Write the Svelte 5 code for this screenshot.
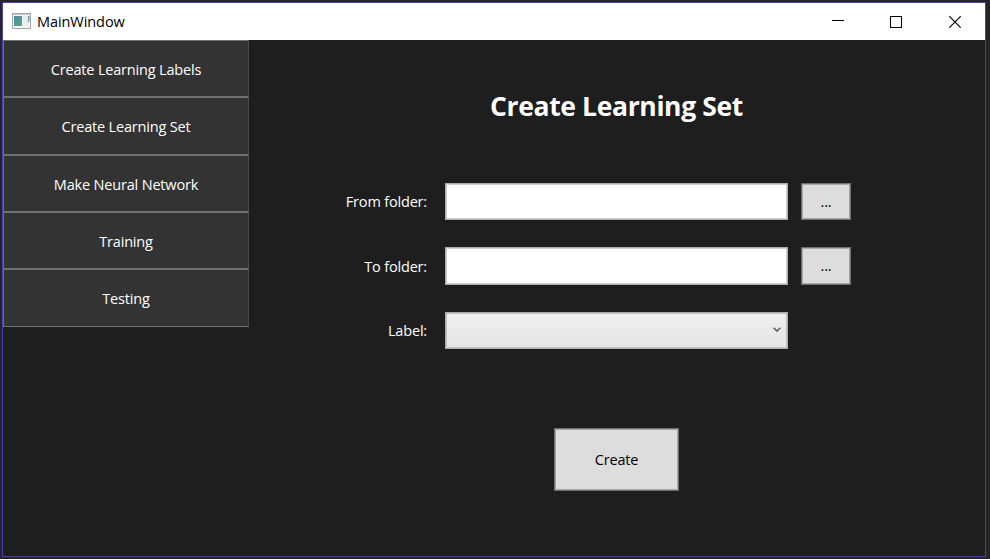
<script>
  const menu = [
    { text: 'Create Learning Labels', h: 57 },
    { text: 'Create Learning Set', h: 58 },
    { text: 'Make Neural Network', h: 57 },
    { text: 'Training', h: 57 },
    { text: 'Testing', h: 58 }
  ];
</script>

<div class="desktop">
  <div class="window">
    <header>
      <svg class="app" width="19" height="16" viewBox="0 0 19 16">
        <defs>
          <linearGradient id="pane" x1="0" y1="0" x2="1" y2="1">
            <stop offset="0" stop-color="#4d87ae" />
            <stop offset="1" stop-color="#5bab7b" />
          </linearGradient>
        </defs>
        <rect x=".5" y=".5" width="18" height="15" fill="#f5f5f5" stroke="#a3a6ad" />
        <path d="M1 1.5H18" stroke="#c9ccd2" />
        <rect x="2" y="3" width="8" height="10" fill="url(#pane)" />
        <rect x="11" y="3" width="6" height="10" fill="#e9ebec" />
        <rect x="16" y="3" width="1.5" height="6" fill="#67a5a2" />
      </svg>
      <span class="name">MainWindow</span>
      <div class="controls">
        <svg class="min" width="12" height="12" viewBox="0 0 12 12"><path d="M0 5.5H12" stroke="#000" /></svg>
        <svg width="12" height="12" viewBox="0 0 12 12"><rect x=".5" y=".5" width="11" height="11" fill="none" stroke="#000" /></svg>
        <svg width="12" height="12" viewBox="0 0 12 12"><path d="M.3 .3L11.7 11.7M11.7 .3L.3 11.7" stroke="#000" stroke-width="1.15" /></svg>
      </div>
    </header>
    <div class="body">
      <nav>
        {#each menu as item}
          <button style="height:{item.h}px"><span>{item.text}</span></button>
        {/each}
      </nav>
      <main>
        <h1>Create Learning Set</h1>
        <div class="form">
          <label for="from">From folder:</label>
          <input id="from" type="text" />
          <button class="push">...</button>
          <label for="to">To folder:</label>
          <input id="to" class="tall" type="text" />
          <button class="push tall">...</button>
          <label for="kind">Label:</label>
          <div id="kind" class="combo" role="combobox" aria-expanded="false" aria-controls="kind" tabindex="0">
            <svg width="8" height="6" viewBox="0 0 8 6"><path d="M.6 .8L4 4.1L7.4 .8" fill="none" stroke="#606060" stroke-width="1.6" /></svg>
          </div>
        </div>
        <button class="push create">Create</button>
      </main>
    </div>
  </div>
</div>

<style>
  :global(body) { margin: 0; background: #252526; }
  * { box-sizing: border-box; }
  .desktop {
    width: 990px; height: 559px; padding: 2px 4px 2px 2px; overflow: hidden;
    background: #252526; font-family: "Open Sans", "Noto Sans", sans-serif;
    font-size: 14.5px; line-height: 20px; font-stretch: 93%; letter-spacing: -0.18px;
  }
  .window { width: 984px; height: 555px; border: 1px solid #483dc2; background: #1e1e1e; }
  header { height: 37px; background: #fff; display: flex; align-items: center; padding-left: 9px; }
  .app { display: block; margin-top: -1px; }
  .name { margin-left: 6px; color: #000; letter-spacing: -0.07px; }
  .controls { display: flex; gap: 47px; margin: 0 24px 0 auto; }
  .controls svg { display: block; }
  .controls .min { margin: -1px -1px 0 0; }
  .body { display: flex; height: 516px; }
  button { font: inherit; letter-spacing: inherit; padding: 0; border-radius: 0; }
  nav { width: 246px; display: flex; flex-direction: column; }
  nav button {
    width: 246px; color: #fff; background: #333;
    border: 1px solid #707070; border-right-color: #484848; padding-top: 2px;
  }
  main { width: 735px; display: flex; flex-direction: column; align-items: center; }
  h1 { margin: 48px 0 0; height: 36px; font-size: 26.5px; line-height: 36px; font-weight: 700; letter-spacing: -0.36px; color: #fff; white-space: nowrap; }
  .form {
    align-self: flex-start; margin: 59px 0 0 76px; display: grid;
    grid-template-columns: 107px 343px 50px; grid-template-rows: 37px 38px 37px;
    column-gap: 13px; row-gap: 27px; align-items: center;
  }
  label { color: #fff; text-align: right; white-space: nowrap; }
  .form label { padding: 1px 5px 0 0; }
  input, .combo {
    width: 343px; height: 37px; background: #fff; border: 1px solid #acadb0;
    box-shadow: inset 0 0 0 1px #cecfd0; border-radius: 0; padding: 0 6px; outline: none;
  }
  .combo { background: linear-gradient(#f0f0f0, #e4e4e4); box-shadow: inset 0 0 0 1px #c2c2c2; display: flex; justify-content: flex-end; align-items: center; padding-bottom: 1px; }
  .push { height: 37px; background: #ddd; color: #000; border: 1px solid #707070; box-shadow: inset 0 0 0 1px #a6a6a6; }
  .tall { height: 38px; }
  .create { width: 125px; height: 63px; margin-top: 79px; }
</style>
